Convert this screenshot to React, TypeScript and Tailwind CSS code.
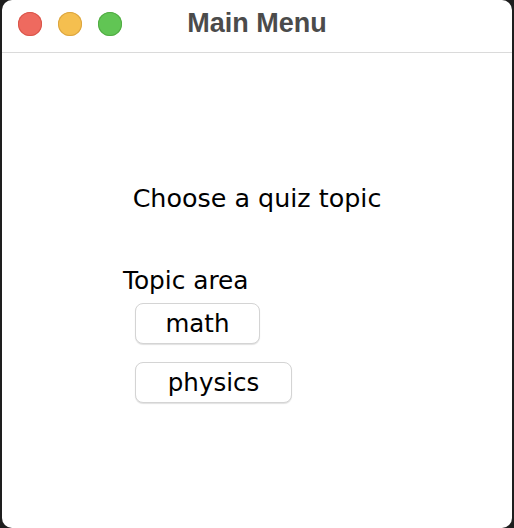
import React from "react";

const body = { fontFamily: '"DejaVu Sans", "Liberation Sans", sans-serif' };

function Light({ fill, border }: { fill: string; border: string }) {
  return (
    <span
      className="block h-[24px] w-[24px] rounded-full"
      style={{ backgroundColor: fill, boxShadow: `inset 0 0 0 1px ${border}` }}
    />
  );
}

function Btn({ label, w }: { label: string; w: string }) {
  return (
    <button
      className={`${w} flex h-[41px] items-center justify-center rounded-[8px] border border-[#d4d4d4] bg-white text-[24.5px] leading-[25px] text-black shadow-[0_1px_1px_rgba(0,0,0,0.12)]`}
      style={body}
    >
      {label}
    </button>
  );
}

export default function App() {
  return (
    <div className="h-[528px] w-[514px] bg-[#1e1e1e] px-[2px]">
      <div className="flex h-full w-full flex-col overflow-hidden rounded-[10px] bg-white">
        <div className="grid h-[53px] shrink-0 grid-cols-[1fr_auto_1fr] items-center border-b border-[#dadada] pb-[5px]">
          <div className="flex items-center gap-[16px] pl-[16px]">
            <Light fill="#ee6a5f" border="#d9564b" />
            <Light fill="#f5bf4f" border="#dba540" />
            <Light fill="#61c554" border="#52ab44" />
          </div>
          <div
            className="text-[27px] font-bold leading-[27px] text-[#4b4b4b]"
            style={{ fontFamily: '"Liberation Sans", Arial, sans-serif' }}
          >
            Main Menu
          </div>
          <div />
        </div>
        <div className="flex flex-col" style={body}>
          <div className="mt-[133px] text-center text-[25.4px] leading-[25px] text-black">
            Choose a quiz topic
          </div>
          <div className="ml-[121px] mt-[57px] text-[24.8px] leading-[25px] text-black">
            Topic area
          </div>
          <div className="ml-[133px] mt-[10px] flex flex-col items-start gap-[18px]">
            <Btn label="math" w="w-[125px]" />
            <Btn label="physics" w="w-[157px]" />
          </div>
        </div>
      </div>
    </div>
  );
}
